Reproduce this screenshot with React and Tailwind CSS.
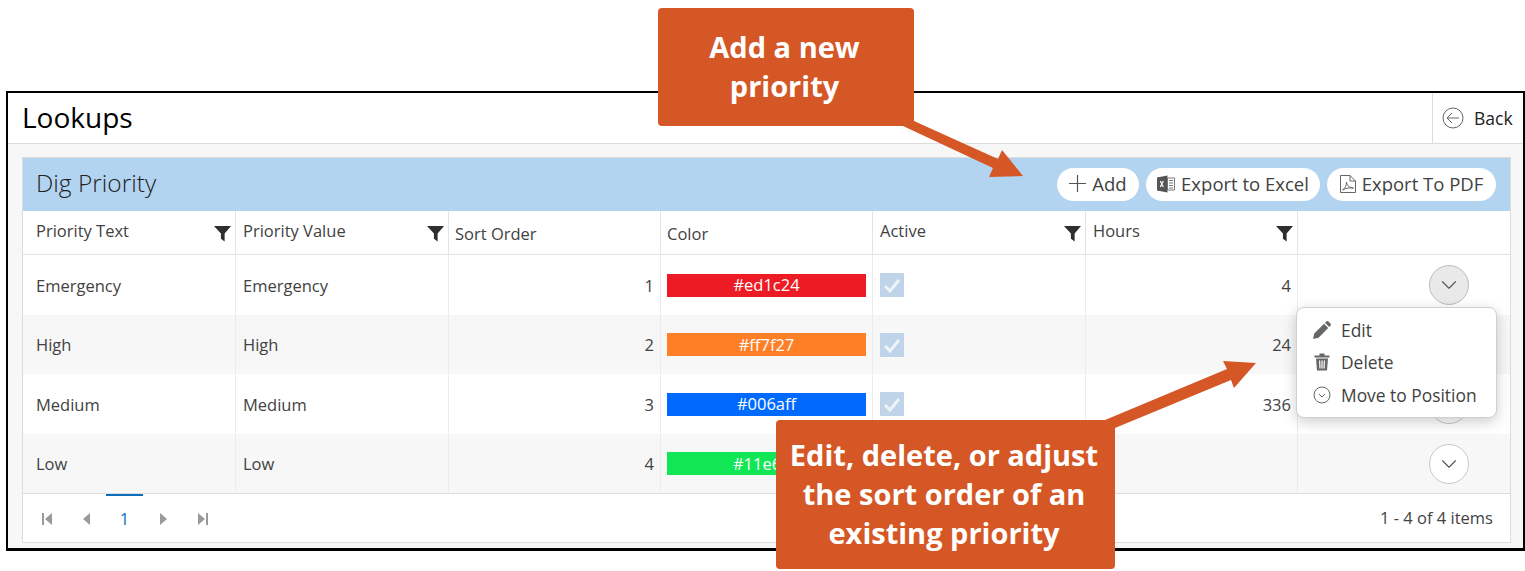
import React from "react";
import { ChevronDown } from "lucide-react";

const rows = [
  { text: "Emergency", sort: 1, color: "#ed1c24", bar: "bg-[#ed1c24]", hours: "4" },
  { text: "High", sort: 2, color: "#ff7f27", bar: "bg-[#ff7f27]", hours: "24" },
  { text: "Medium", sort: 3, color: "#006aff", bar: "bg-[#006aff]", hours: "336" },
  { text: "Low", sort: 4, color: "#11e654", bar: "bg-[#11e654]", hours: "" },
];

function Funnel() {
  return (
    <svg viewBox="0 0 16 16" className="h-[17px] w-[17px] fill-[#2e2e2e]">
      <path d="M0 1h16L10 8v7.500L6.500 13V8z" />
    </svg>
  );
}

function ExcelIcon() {
  return (
    <svg viewBox="0 0 18 18" className="h-[18px] w-[18px]">
      <path d="M0 2.500l10.500-2v17L0 15.500z" fill="#555" />
      <path d="M10.500 3h7v12h-7z" fill="none" stroke="#777" />
      <path d="M12 5.500h4M12 8h4M12 10.500h4M12 13h4" stroke="#777" />
      <path d="M3.300 6l3 6M6.300 6l-3 6" stroke="#fff" strokeWidth="1.200" />
    </svg>
  );
}

function PdfIcon() {
  return (
    <svg viewBox="0 0 16 18" className="h-[18px] w-[16px]" fill="none" stroke="#666" strokeWidth="1">
      <path d="M.5.500h9.500l5.500 5.500v11.500H.5z" />
      <path d="M10 .5V6h5.500" />
      <path d="M2.500 15c2.500-1.500 4-4.500 4-8 0 3 3 6 7 6-3.500-.5-7.500 0-11 2z" />
    </svg>
  );
}

function HeadCell({ label, filter, first, last }) {
  return (
    <div
      className={`flex items-center justify-between border-b border-[#e4e4e4] pr-[4px] ${
        first ? "pl-[13px]" : filter ? "pl-[7px]" : "pl-[6px]"
      } ${last ? "" : "border-r"} ${filter ? "pb-[2px]" : "pt-[4px]"}`}
    >
      <span>{label}</span>
      {filter && (
        <span className="mt-[4px]">
          <Funnel />
        </span>
      )}
    </div>
  );
}

function Row({ row, index }) {
  const bg = index % 2 ? "bg-[#f7f7f7]" : "bg-white";
  const cell = `flex h-full items-center border-r border-[#ececec] ${bg}`;
  const btn =
    index === 0
      ? "bg-[#e9e9e9] border-[#bcbcbc]"
      : "bg-white border-[#c8c8c8]";
  return (
    <>
      <div className={`${cell} pl-[13px] pt-[2px]`}>{row.text}</div>
      <div className={`${cell} pl-[7px] pt-[2px]`}>{row.text}</div>
      <div className={`${cell} justify-end pr-[6px] pt-[2px]`}>{row.sort}</div>
      <div className={`${cell} pl-[6px] pr-[6px]`}>
        <div className={`flex h-[23px] w-full items-center justify-center pt-[1px] text-white ${row.bar}`}>
          {row.color}
        </div>
      </div>
      <div className={`${cell} pl-[7px]`}>
        <div className="flex h-6 w-6 items-center justify-center bg-[#bfd4e9]">
          <svg viewBox="0 0 24 24" className="h-6 w-6" fill="none" stroke="#eef3f8" strokeWidth="3">
            <path d="M5 13l5 5 9-11" />
          </svg>
        </div>
      </div>
      <div className={`${cell} justify-end pr-[6px] pt-[2px]`}>{row.hours}</div>
      <div className={`flex h-full items-center justify-end pr-[41px] ${bg}`}>
        <button className={`flex h-10 w-10 items-center justify-center rounded-full border ${btn}`}>
          <ChevronDown size={26} strokeWidth={1} className="text-[#555]" />
        </button>
      </div>
    </>
  );
}

export default function App() {
  return (
    <div className="relative h-[571px] w-[1525px] overflow-hidden bg-white pl-[6px] pt-[91px] font-['Open_Sans',sans-serif] text-[16.500px] text-[#424242]">
      <div className="flex h-[460px] w-[1519px] flex-col border-x-2 border-t-2 border-b-[3px] border-black">
        {/* page title */}
        <div className="flex h-[51px] shrink-0 items-center justify-between border-b border-[#dcdcdc]">
          <h1 className="pb-[3px] pl-[14px] text-[28px] text-black">Lookups</h1>
          <a className="flex h-full w-[91px] items-center gap-[10px] border-l border-[#dcdcdc] pl-[9px] text-[17.500px] text-[#222]">
            <svg viewBox="0 0 22 22" className="h-[22px] w-[22px]" fill="none" stroke="#666" strokeWidth="1">
              <circle cx="11" cy="11" r="10" />
              <path d="M17 11H5M10 6l-5 5 5 5" />
            </svg>
            Back
          </a>
        </div>

        <div className="flex-1 bg-[#f7f7f7] pl-[14px] pr-[12px] pt-[13px] pb-[5px]">
          <div className="flex h-[386px] flex-col border border-[#dcdcdc] bg-white">
            {/* toolbar */}
            <div className="flex h-[53px] shrink-0 items-center justify-between bg-[#b3d4f0] pl-[13px] pr-[14px]">
              <h2 className="pb-[2px] text-[24.500px] font-light text-[#222]">Dig Priority</h2>
              <div className="flex gap-[7px] text-[18.500px]">
                <button className="flex h-[33px] w-[82px] items-center justify-center gap-[6px] rounded-full bg-white pb-[2px]">
                  <svg viewBox="0 0 17 17" className="h-[17px] w-[17px]" stroke="#555" strokeWidth="1.200">
                    <path d="M8.500 0v17M0 8.500h17" />
                  </svg>
                  Add
                </button>
                <button className="flex h-[33px] w-[174px] items-center justify-center gap-[6px] rounded-full bg-white pb-[2px]">
                  <ExcelIcon />
                  Export to Excel
                </button>
                <button className="flex h-[33px] w-[169px] items-center justify-center gap-[6px] rounded-full bg-white pb-[2px]">
                  <PdfIcon />
                  Export To PDF
                </button>
              </div>
            </div>

            {/* grid */}
            <div className="grid shrink-0 grid-cols-[213px_213px_212px_212px_213px_212px_1fr] grid-rows-[44px_60px_59px_60px_59px] border-b border-[#dcdcdc]">
              <HeadCell label="Priority Text" filter first />
              <HeadCell label="Priority Value" filter />
              <HeadCell label="Sort Order" />
              <HeadCell label="Color" />
              <HeadCell label="Active" filter />
              <HeadCell label="Hours" filter />
              <HeadCell label="" last />
              {rows.map((row, i) => (
                <Row key={row.text} row={row} index={i} />
              ))}
            </div>

            {/* pager */}
            <div className="flex flex-1 items-center justify-between pl-[18px] pr-[17px] pt-[1px]">
              <div className="flex items-center text-[#9a9a9a]">
                <svg viewBox="0 0 12 12" className="h-3 w-3 fill-current"><path d="M1 0h2v12H1zM11 0v12L4 6z" /></svg>
                <svg viewBox="0 0 12 12" className="ml-[28px] h-3 w-3 fill-current"><path d="M9 0v12L2 6z" /></svg>
                <div className="relative ml-[13px] w-[37px] pt-[1px] text-center text-[#0a6ebd]">
                  1
                  <span className="absolute left-0 top-[-12px] h-[2px] w-full bg-[#0a6ebd]" />
                </div>
                <svg viewBox="0 0 12 12" className="ml-[14px] h-3 w-3 fill-current"><path d="M3 0v12l7-6z" /></svg>
                <svg viewBox="0 0 12 12" className="ml-[28px] h-3 w-3 fill-current"><path d="M1 0v12l7-6zM9 0h2v12H9z" /></svg>
              </div>
              <span>1 - 4 of 4 items</span>
            </div>
          </div>
        </div>
      </div>

      {/* action menu */}
      <div className="absolute left-[1296px] top-[307px] flex h-[111px] w-[201px] flex-col justify-center gap-[6px] rounded-[8px] border border-[#cfcfcf] bg-white pl-[16px] text-[17.400px] shadow-[0_4px_14px_rgba(0,0,0,0.2)]">
        <div className="flex items-center gap-[10px]">
          <svg viewBox="0 0 18 18" className="h-[18px] w-[18px] fill-[#666]">
            <path d="M0 18l1.300-5.500L11 2.800l4.200 4.200L5.500 16.700zM12 1.800l1.200-1.200c.7-.7 1.600-.7 2.300 0l1.900 1.900c.7.7.7 1.600 0 2.300L16.200 6z" />
          </svg>
          Edit
        </div>
        <div className="flex items-center gap-[10px]">
          <svg viewBox="0 0 18 18" className="h-[18px] w-[18px] fill-[#666]">
            <path fillRule="evenodd" d="M1.500 2.500h15v2h-15zM6.500.5h5v2h-5zM3 5.500h12l-1 12H4zM6 7.500l.4 8h1.200l-.4-8zM8.400 7.500v8h1.200v-8zM10.800 7.500l-.4 8h1.200l.4-8z" />
          </svg>
          Delete
        </div>
        <div className="flex items-center gap-[10px]">
          <svg viewBox="0 0 18 18" className="h-[18px] w-[18px]" fill="none" stroke="#666">
            <circle cx="9" cy="9" r="8" />
            <path d="M6 8l3 3 3-3" />
          </svg>
          Move to Position
        </div>
      </div>

      {/* arrows */}
      <svg className="pointer-events-none absolute left-0 top-0 h-[571px] w-[1525px]" viewBox="0 0 1525 571">
        <path fill="#d55725" d="M903 126L914 121L998 159L1002 150L1023 176L989 177L993 168Z" />
        <path fill="#d55725" d="M1105 420L1227 369L1223 361L1256 363L1234 388L1231 380L1115 428Z" />
      </svg>

      {/* callouts */}
      <div className="absolute left-[658px] top-[8px] flex h-[118px] w-[256px] items-center justify-center rounded-[4px] bg-[#d55725] pb-[2px] pr-[3px] text-center text-[29px] font-bold leading-[39px] text-white">
        <span>
          Add a new
          <br />
          priority
        </span>
      </div>
      <div className="absolute left-[776px] top-[420px] flex h-[149px] w-[339px] items-center justify-center rounded-[4px] bg-[#d55725] pb-[2px] pr-[3px] text-center text-[29px] font-bold leading-[39px] text-white">
        <span>
          Edit, delete, or adjust
          <br />
          the sort order of an
          <br />
          existing priority
        </span>
      </div>
    </div>
  );
}
